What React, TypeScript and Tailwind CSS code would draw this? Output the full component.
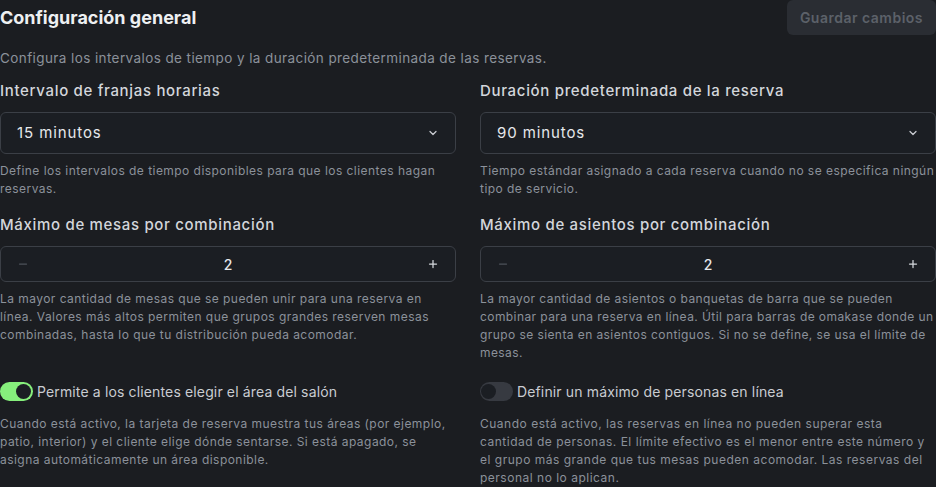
import React, { useState } from "react";
import { ChevronDown, Minus, Plus } from "lucide-react";

const font = { fontFamily: "Inter, 'Noto Sans', sans-serif" };

const Help = ({
  children,
  className = "mt-2 tracking-[0.038em]",
}: {
  children: React.ReactNode;
  className?: string;
}) => <p className={`${className} text-[12px] leading-[18px] text-[#8b919a]`}>{children}</p>;

const Label = ({ children }: { children: React.ReactNode }) => (
  <label className="block mb-[10px] text-[15px] leading-[22px] font-medium tracking-[0.045em] text-[#d3d6db]">
    {children}
  </label>
);

const SelectBox = ({ value }: { value: string }) => (
  <div className="h-[42px] flex items-center justify-between px-4 rounded-md border border-[#3b3f46] bg-[#1b1e23]">
    <span className="text-[15px] tracking-[0.06em] text-[#e6e8eb]">{value}</span>
    <ChevronDown className="w-3 h-3 text-[#c9ccd1]" strokeWidth={2.5} />
  </div>
);

const Stepper = ({ value }: { value: number }) => (
  <div className="h-[36px] flex items-center justify-between px-4 rounded-md border border-[#3b3f46] bg-[#1b1e23]">
    <Minus className="w-3 h-3 text-[#4d525a]" strokeWidth={2.5} />
    <span className="text-[14px] font-medium text-[#e6e8eb]">{value}</span>
    <Plus className="w-3 h-3 text-[#d6d9dd]" strokeWidth={2.5} />
  </div>
);

const Toggle = ({ on, label }: { on: boolean; label: string }) => (
  <div className="flex items-center gap-1">
    <span
      className={
        on
          ? "w-[33px] h-[19px] rounded-full bg-[#86ef7c] flex items-center justify-end pr-[2px]"
          : "w-[33px] h-[19px] rounded-full bg-[#373a41] flex items-center justify-start pl-[1px]"
      }
    >
      <span className="w-[15px] h-[15px] rounded-full bg-[#1b1e23]" />
    </span>
    <span className="text-[14px] tracking-[0.01em] text-[#c9ccd1]">{label}</span>
  </div>
);

export default function App() {
  const [saving] = useState(false);
  return (
    <div style={font} className="min-h-screen w-[936px] bg-[#1b1d21] overflow-hidden">
      <div className="flex items-center justify-between h-[34px]">
        <h1 className="text-[18px] font-bold text-[#eef0f2]">Configuración general</h1>
        <button
          disabled={!saving}
          className="h-[35px] px-[13px] rounded-md bg-[#2a2d33] text-[14px] font-semibold tracking-[0.035em] text-[#5c6169]"
        >
          Guardar cambios
        </button>
      </div>
      <p className="mt-[14px] text-[13.5px] leading-5 tracking-[0.03em] text-[#8b919a]">
        Configura los intervalos de tiempo y la duración predeterminada de las reservas.
      </p>

      <div className="mt-[12px] grid grid-cols-2 gap-x-6 gap-y-[16px]">
        <div>
          <Label>Intervalo de franjas horarias</Label>
          <SelectBox value="15 minutos" />
          <Help>Define los intervalos de tiempo disponibles para que los clientes hagan reservas.</Help>
        </div>
        <div>
          <Label>Duración predeterminada de la reserva</Label>
          <SelectBox value="90 minutos" />
          <Help>
            Tiempo estándar asignado a cada reserva cuando no se especifica ningún tipo de servicio.
          </Help>
        </div>

        <div>
          <Label>Máximo de mesas por combinación</Label>
          <Stepper value={2} />
          <Help>
            La mayor cantidad de mesas que se pueden unir para una reserva en línea. Valores más altos
            permiten que grupos grandes reserven mesas combinadas, hasta lo que tu distribución pueda
            acomodar.
          </Help>
        </div>
        <div>
          <Label>Máximo de asientos por combinación</Label>
          <Stepper value={2} />
          <Help className="mt-2 tracking-[0.035em]">
            La mayor cantidad de asientos o banquetas de barra que se pueden combinar para una reserva
            en línea. Útil para barras de omakase donde un grupo se sienta en asientos contiguos. Si no
            se define, se usa el límite de mesas.
          </Help>
        </div>

        <div className="mt-[3px]">
          <Toggle on label="Permite a los clientes elegir el área del salón" />
          <Help className="mt-[13px] tracking-[0.038em]">
            Cuando está activo, la tarjeta de reserva muestra tus áreas (por ejemplo, patio, interior)
            y el cliente elige dónde sentarse. Si está apagado, se asigna automáticamente un área
            disponible.
          </Help>
        </div>
        <div className="mt-[3px]">
          <Toggle on={false} label="Definir un máximo de personas en línea" />
          <Help className="mt-[13px] tracking-[0.042em]">
            Cuando está activo, las reservas en línea no pueden superar esta cantidad de personas. El
            límite efectivo es el menor entre este número y el grupo más grande que tus mesas pueden
            acomodar. Las reservas del personal no lo aplican.
          </Help>
        </div>
      </div>
    </div>
  );
}
